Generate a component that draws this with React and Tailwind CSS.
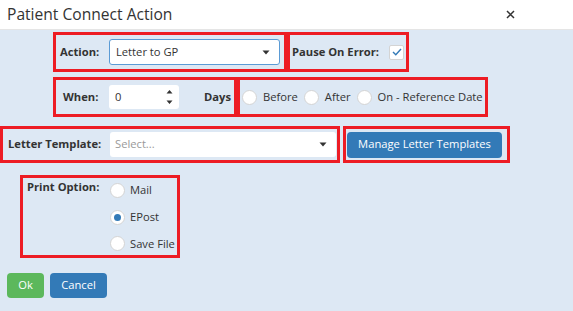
import React, { useState } from 'react';

const Radio = ({ checked }) => (
  <span className="flex h-[15px] w-[15px] shrink-0 items-center justify-center rounded-full border border-[#d4d4d4] bg-white">
    {checked && <span className="h-[7px] w-[7px] rounded-full bg-[#337ab7]" />}
  </span>
);

const Caret = () => (
  <svg width="8" height="5" viewBox="0 0 8 5" className="shrink-0">
    <path d="M0.5 0.5 H7.5 L4 4.5 Z" fill="#333" />
  </svg>
);

const App = () => {
  const [printOption, setPrintOption] = useState('epost');

  return (
    <div className="h-[311px] w-[573px] overflow-hidden whitespace-nowrap bg-[#dde8f4] font-['Open_Sans',sans-serif] text-[11.2px] text-[#333]">
      {/* header */}
      <div className="flex h-[30px] items-center justify-between border-b border-[#e5e5e5] bg-white pl-[7px] pr-[58px]">
        <span className="text-[15.6px] leading-none">Patient Connect Action</span>
        <svg width="9" height="9" viewBox="0 0 9 9">
          <path d="M1 1 L8 8 M8 1 L1 8" stroke="#333" strokeWidth="1.5" />
        </svg>
      </div>

      {/* action row */}
      <div className="ml-[53px] mt-[2px] flex">
        <div className="flex h-[40px] w-[234px] items-center border-[3px] border-[#ed1c24] pl-[4px]">
          <span className="w-[49px] font-bold">Action:</span>
          <div className="flex h-[26px] w-[171px] items-center justify-between rounded-[3px] border border-[#5b9bd5] bg-white pl-[6px] pr-[9px]">
            <span>Letter to GP</span>
            <Caret />
          </div>
        </div>
        <div className="flex h-[40px] w-[122px] items-center border-[3px] border-[#ed1c24] pl-[2px]">
          <span className="w-[97px] font-bold">Pause On Error:</span>
          <span className="flex h-[15px] w-[15px] items-center justify-center rounded-[2px] border border-[#d4d4d4] bg-white">
            <svg width="10" height="8" viewBox="0 0 10 8">
              <path d="M1 4 L3.8 6.8 L9 1" stroke="#337ab7" strokeWidth="1.4" fill="none" />
            </svg>
          </span>
        </div>
      </div>

      {/* when row */}
      <div className="ml-[53px] mt-[5px] flex">
        <div className="flex h-[40px] w-[184px] items-center border-[3px] border-[#ed1c24] pl-[7px]">
          <span className="w-[46px] font-bold">When:</span>
          <div className="flex h-[24px] w-[70px] items-center justify-between rounded-[3px] bg-white pl-[6px] pr-[6px]">
            <span>0</span>
            <svg width="7" height="16" viewBox="0 0 7 16">
              <path d="M0.5 4.5 L3.5 1 L6.5 4.5 Z M0.5 11.5 L3.5 15 L6.5 11.5 Z" fill="#333" />
            </svg>
          </div>
          <span className="ml-[25px] font-bold">Days</span>
        </div>
        <div className="flex h-[40px] w-[251px] items-center gap-[6px] border-[3px] border-[#ed1c24] pl-[2px]">
          <Radio />
          <span>Before</span>
          <Radio />
          <span>After</span>
          <Radio />
          <span>On - Reference Date</span>
        </div>
      </div>

      {/* letter template row */}
      <div className="mt-[9px] flex">
        <div className="flex h-[37px] w-[340px] items-center border-[3px] border-[#ed1c24] pl-[5px]">
          <span className="w-[102px] font-bold">Letter Template:</span>
          <div className="flex h-[25px] w-[226px] items-center justify-between rounded-[3px] bg-white pl-[5px] pr-[9px]">
            <span className="text-[#999]">Select...</span>
            <Caret />
          </div>
        </div>
        <div className="ml-[3px] flex h-[37px] w-[167px] items-center border-[3px] border-[#ed1c24] pl-[1px]">
          <button className="h-[26px] w-[155px] rounded-[4px] bg-[#337ab7] text-white">Manage Letter Templates</button>
        </div>
      </div>

      {/* print option */}
      <div className="ml-[20px] mt-[12px] flex h-[83px] w-[160px] border-[3px] border-[#ed1c24] pl-[4px] pt-[1px]">
        <span className="w-[83px] font-bold">Print Option:</span>
        <div className="flex flex-col gap-[10px] pt-[3px]">
          {[
            ['mail', 'Mail'],
            ['epost', 'EPost'],
            ['file', 'Save File'],
          ].map(([key, label]) => (
            <label key={key} className="flex items-center gap-[5px]" onClick={() => setPrintOption(key)}>
              <Radio checked={printOption === key} />
              <span>{label}</span>
            </label>
          ))}
        </div>
      </div>

      {/* footer buttons */}
      <div className="ml-[7px] mt-[15px] flex gap-[6px]">
        <button className="h-[25px] w-[37px] rounded-[4px] bg-[#5cb85c] text-white">Ok</button>
        <button className="h-[25px] w-[57px] rounded-[4px] bg-[#337ab7] text-white">Cancel</button>
      </div>
    </div>
  );
};

export default App;
